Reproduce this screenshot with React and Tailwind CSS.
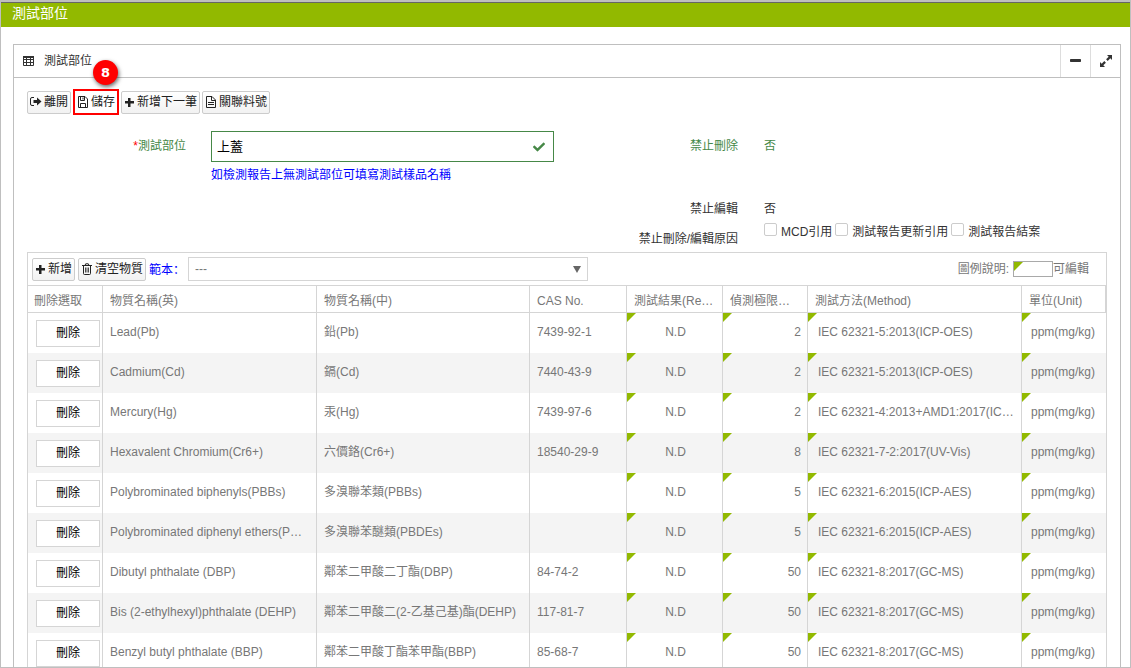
import React from "react";
import { FaCheck } from "react-icons/fa";

const rows = [
  ["Lead(Pb)", "鉛(Pb)", "7439-92-1", "N.D", "2", "IEC 62321-5:2013(ICP-OES)"],
  ["Cadmium(Cd)", "鎘(Cd)", "7440-43-9", "N.D", "2", "IEC 62321-5:2013(ICP-OES)"],
  ["Mercury(Hg)", "汞(Hg)", "7439-97-6", "N.D", "2", "IEC 62321-4:2013+AMD1:2017(ICP-MS)"],
  ["Hexavalent Chromium(Cr6+)", "六價鉻(Cr6+)", "18540-29-9", "N.D", "8", "IEC 62321-7-2:2017(UV-Vis)"],
  ["Polybrominated biphenyls(PBBs)", "多溴聯苯類(PBBs)", "", "N.D", "5", "IEC 62321-6:2015(ICP-AES)"],
  ["Polybrominated diphenyl ethers(PBDEs)", "多溴聯苯醚類(PBDEs)", "", "N.D", "5", "IEC 62321-6:2015(ICP-AES)"],
  ["Dibutyl phthalate (DBP)", "鄰苯二甲酸二丁酯(DBP)", "84-74-2", "N.D", "50", "IEC 62321-8:2017(GC-MS)"],
  ["Bis (2-ethylhexyl)phthalate (DEHP)", "鄰苯二甲酸二(2-乙基己基)酯(DEHP)", "117-81-7", "N.D", "50", "IEC 62321-8:2017(GC-MS)"],
  ["Benzyl butyl phthalate (BBP)", "鄰苯二甲酸丁酯苯甲酯(BBP)", "85-68-7", "N.D", "50", "IEC 62321-8:2017(GC-MS)"],
];

const headers = [
  "刪除選取",
  "物質名稱(英)",
  "物質名稱(中)",
  "CAS No.",
  "測試結果(Result)",
  "偵測極限值(MDL)",
  "測試方法(Method)",
  "單位(Unit)",
];

function SignOutIcon() {
  return (
    <svg className="size-3 shrink-0" viewBox="0 0 12 12" aria-hidden="true">
      <path d="M4 1.500H2Q.5 1.500.5 3v5Q.5 9.500 2 9.500h2" fill="none" stroke="currentColor" />
      <path d="M7 1.500l4.500 4L7 9.500V7H3.500V4H7z" fill="currentColor" />
    </svg>
  );
}

function SaveIcon() {
  return (
    <svg className="size-3 shrink-0" viewBox="0 0 12 12" fill="none" stroke="currentColor" aria-hidden="true">
      <path d="M1.500.5H8l2.500 2.500v8.500h-9z" />
      <path d="M3.500.5v4h4v-4M6 1.500v2M3.500 11.500v-4h5v4" />
    </svg>
  );
}

function FileIcon() {
  return (
    <svg className="size-3 shrink-0" viewBox="0 0 12 12" fill="none" stroke="currentColor" aria-hidden="true">
      <path d="M1.500.5H7l3.500 3.500v7.500h-9z" />
      <path d="M6.500.5v4h4M3 6.500h6M3 8.500h6" />
    </svg>
  );
}

function TrashIcon() {
  return (
    <svg className="size-3 shrink-0" viewBox="0 0 12 12" fill="none" stroke="currentColor" aria-hidden="true">
      <path d="M1 2.500h10M4 2.500l.7-1.700h2.600l.7 1.700M2.500 2.500v8q0 1 1 1h5q1 0 1-1v-8" />
      <path d="M4.500 4.500v5M6 4.500v5M7.500 4.500v5" strokeWidth=".8" />
    </svg>
  );
}

function PlusIcon() {
  return (
    <svg className="size-[11px] shrink-0" viewBox="0 0 11 11" fill="currentColor" aria-hidden="true">
      <path d="M4 1h2.500v3H10v2.500H6.500V10H4V6.500H1V4h3z" />
    </svg>
  );
}

function ExpandIcon() {
  return (
    <svg className="size-3" viewBox="0 0 12 12" fill="currentColor" aria-hidden="true">
      <path d="M7 0h5v5l-1.700-1.700-2.600 2.600-1.600-1.600 2.600-2.600z" />
      <path d="M5 12H0V7l1.700 1.700 2.600-2.600 1.600 1.600-2.600 2.600z" />
    </svg>
  );
}

function MinusIcon() {
  return (
    <svg className="h-3 w-[11px]" viewBox="0 0 11 12" aria-hidden="true">
      <rect y="4" width="11" height="3" rx=".7" fill="currentColor" />
    </svg>
  );
}

function TableIcon() {
  return (
    <svg className="h-[10px] w-[11px] shrink-0" viewBox="0 0 11 10" fill="none" stroke="#333" aria-hidden="true">
      <path d="M.5 1h10M.5 3.500h10M.5 6.500h10M.5 9.500h10M.5.5v9M3.500 1v8.500M7.500 1v8.500M10.500.5v9" />
      <path d="M0 1h11" strokeWidth="2" />
    </svg>
  );
}

function ToolButton({ icon, children }) {
  return (
    <button
      type="button"
      className="flex h-[23px] items-center gap-[2px] rounded-[2px] border border-[#ccc] bg-linear-to-b from-white to-[#f2f2f2] px-[2px] whitespace-nowrap text-[#222]"
    >
      {icon}
      {children}
    </button>
  );
}

function Check({ label }) {
  return (
    <label className="flex items-start gap-1">
      <input type="checkbox" className="size-[13px] appearance-none rounded-[2px] border border-[#ccc] bg-white checked:bg-[#92b900]" />
      {label}
    </label>
  );
}

const corner =
  "relative before:absolute before:top-0 before:left-0 before:border-t-[9px] before:border-r-[9px] before:border-t-[#92b900] before:border-r-transparent before:content-['']";
const cell = "truncate border-r border-[#d5d5d5] pb-[2px]";

export default function App() {
  return (
    <div className="flex h-screen flex-col overflow-hidden border border-t-2 border-[#bfbfbf] bg-white font-['Liberation_Sans','Noto_Sans_CJK_TC',sans-serif] text-[12px] leading-[18px] text-[#333]">
      <header className="flex h-[25px] shrink-0 items-center border-t border-[#666] bg-[#92b900] pb-1 pl-[11px]">
        <h1 className="text-[14px] leading-5 text-white">測試部位</h1>
      </header>

      <main className="mt-[17px] mr-[9px] ml-3 border border-[#bfbfbf]">
        <div className="flex h-[33px] items-stretch border-b border-[#bfbfbf]">
          <h2 className="flex flex-1 items-center gap-[10px] pl-[9px]">
            <TableIcon />
            測試部位
          </h2>
          <button type="button" aria-label="收合" className="flex w-[30px] items-center justify-center border-l border-[#ddd]">
            <MinusIcon />
          </button>
          <button type="button" aria-label="展開" className="flex w-[30px] items-center justify-center border-l border-[#ddd]">
            <ExpandIcon />
          </button>
        </div>

        <div className="px-[13px]">
          <div className="flex items-center gap-[2px] pt-[11px]">
            <ToolButton icon={<SignOutIcon />}>離開</ToolButton>
            <div className="relative">
              <button
                type="button"
                className="flex h-[26px] items-center gap-[2px] border-2 border-[#f00] bg-white px-[2px] whitespace-nowrap text-[#222]"
              >
                <SaveIcon />
                儲存
              </button>
              <span className="absolute -top-[29px] left-5 flex size-[25px] items-center justify-center rounded-full bg-[#f00] font-['DejaVu_Sans'] text-[13px] font-bold text-white shadow-[1px_2px_4px_rgba(0,0,0,0.6)]">
                8
              </span>
            </div>
            <ToolButton icon={<PlusIcon />}>新增下一筆</ToolButton>
            <ToolButton icon={<FileIcon />}>關聯料號</ToolButton>
          </div>

          <form className="grid grid-cols-2 pt-4">
            <div className="flex gap-[25px] pr-[13px] text-[#468847]">
              <label htmlFor="part" className="w-[159px] shrink-0 pt-[6px] text-right">
                <span className="text-[#f00]">*</span>測試部位
              </label>
              <div className="min-w-0 flex-1">
                <div className="relative">
                  <input
                    id="part"
                    defaultValue="上蓋"
                    className="block h-[31px] w-full border border-[#468847] pr-8 pb-[2px] pl-[5px] text-[13px] text-black outline-none"
                  />
                  <FaCheck className="absolute top-[10px] right-[9px] size-3" />
                </div>
                <p className="pt-1 text-[#00f]">如檢測報告上無測試部位可填寫測試樣品名稱</p>
              </div>
            </div>

            <dl className="grid grid-cols-[171px_1fr] content-start gap-x-[26px]">
              <dt className="h-[63px] pt-[6px] text-right text-[#468847]">禁止刪除</dt>
              <dd className="h-[63px] pt-[6px] text-[#468847]">否</dd>
              <dt className="pt-[6px] text-right">禁止編輯</dt>
              <dd className="pt-[6px]">否</dd>
              <dt className="pt-3 pb-[4px] text-right">禁止刪除/編輯原因</dt>
              <dd className="flex items-start gap-[3px] pt-[5px] whitespace-nowrap">
                <Check label="MCD引用" />
                <Check label="測試報告更新引用" />
                <Check label="測試報告結案" />
              </dd>
            </dl>
          </form>

          <section className="border border-[#d5d5d5]">
            <div className="flex h-8 items-center gap-[3px] pl-1 text-[#777]">
              <ToolButton icon={<PlusIcon />}>新增</ToolButton>
              <ToolButton icon={<TrashIcon />}>清空物質</ToolButton>
              <label htmlFor="template" className="font-['Noto_Sans_CJK_SC',sans-serif] text-[#00f]" lang="zh-Hans">
                範本：
              </label>
              <div className="relative w-[400px]">
                <select
                  id="template"
                  className="block h-6 w-full appearance-none border border-[#d5d5d5] bg-white pr-6 pl-[6px] text-[#777] outline-none"
                >
                  <option>---</option>
                </select>
                <svg className="pointer-events-none absolute top-[9px] right-[7px] h-[7px] w-2" viewBox="0 0 8 7" aria-hidden="true">
                  <path d="M0 0h8L4 7z" fill="#666" />
                </svg>
              </div>
              <div className="ml-auto flex items-center pr-[17px]">
                <span className="mr-1">圖例說明:</span>
                <span className={`h-4 w-10 border border-[#a9a9a9] ${corner}`} />
                可編輯
              </div>
            </div>

            <table className="w-full table-fixed border-separate border-spacing-0 text-[#777]">
              <colgroup>
                <col className="w-[75px]" />
                <col className="w-[214px]" />
                <col className="w-[213px]" />
                <col className="w-[97px]" />
                <col className="w-[96px]" />
                <col className="w-[85px]" />
                <col className="w-[214px]" />
                <col className="w-[84px]" />
              </colgroup>
              <thead>
                <tr className="h-7">
                  {headers.map((h) => (
                    <th
                      key={h}
                      className="truncate border-y border-r border-[#d5d5d5] px-[7px] pt-[3px] text-left font-normal first:pl-[6px]"
                    >
                      {h}
                    </th>
                  ))}
                </tr>
              </thead>
              <tbody>
                {rows.map(([en, zh, cas, result, limit, method]) => (
                  <tr key={en} className="h-10 even:bg-[#f4f4f4]">
                    <td className="border-r border-[#d5d5d5] pl-2">
                      <button type="button" className="block h-[27px] w-16 border border-[#d5d5d5] bg-white text-black">
                        刪除
                      </button>
                    </td>
                    <td className={`${cell} px-[7px]`}>{en}</td>
                    <td className={`${cell} px-[7px]`}>{zh}</td>
                    <td className={`${cell} px-[7px]`}>{cas}</td>
                    <td className={`${cell} ${corner} pr-[6px] pl-2 text-center`}>{result}</td>
                    <td className={`${cell} ${corner} pr-[6px] text-right`}>{limit}</td>
                    <td className={`${cell} ${corner} pr-[7px] pl-[10px]`}>{method}</td>
                    <td className={`truncate pb-[2px] pl-[9px] ${corner}`}>ppm(mg/kg)</td>
                  </tr>
                ))}
              </tbody>
            </table>
          </section>
        </div>
      </main>
    </div>
  );
}
